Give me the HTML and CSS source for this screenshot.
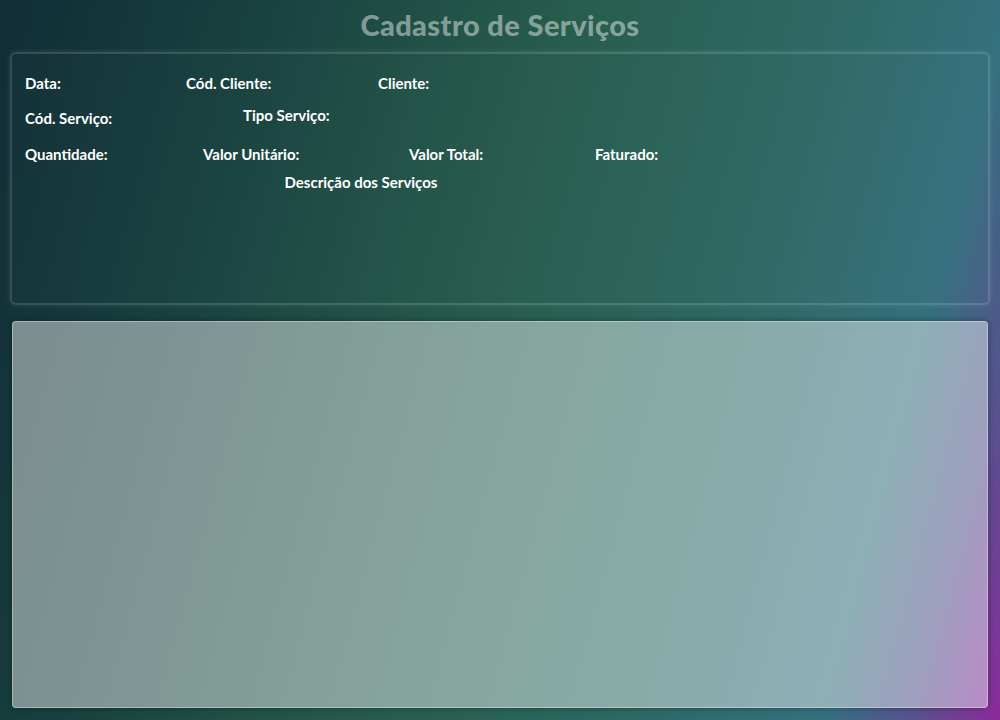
FILE: index.html
```html
<!DOCTYPE html>
<html lang="pt-BR">
<head>
<meta charset="utf-8">
<title>Cadastro de Serviços</title>
<link rel="stylesheet" href="styles.css">
</head>
<body>
<div class="page">
  <h1 class="title">Cadastro de Serviços</h1>
  <form class="form-panel">
    <div class="row row-1">
      <div class="field w-161"><label>Data:</label></div>
      <div class="field w-192"><label>Cód. Cliente:</label></div>
      <div class="field"><label>Cliente:</label></div>
    </div>
    <div class="row row-2">
      <div class="field w-218 low"><label>Cód. Serviço:</label></div>
      <div class="field"><label>Tipo Serviço:</label></div>
    </div>
    <div class="row row-3">
      <div class="field w-178"><label>Quantidade:</label></div>
      <div class="field w-206"><label>Valor Unitário:</label></div>
      <div class="field w-186"><label>Valor Total:</label></div>
      <div class="field"><label>Faturado:</label></div>
    </div>
    <div class="row row-4">
      <div class="desc"><label>Descrição dos Serviços</label></div>
    </div>
  </form>
  <section class="table-panel"></section>
</div>
</body>
</html>
```
FILE: styles.css
```css
html, body {
  margin: 0;
  padding: 0;
}
body {
  width: 1000px;
  height: 720px;
  overflow: hidden;
  font-family: Lato, "Noto Sans", "Liberation Sans", sans-serif;
  background: linear-gradient(105deg, #112d36 0%, #19413f 22%, #275d4d 48%, #2d6862 68%, #35707e 85%, #52568c 92%, #8c2a9c 100%);
}
.page {
  display: flex;
  flex-direction: column;
  height: 720px;
  padding: 0 10px;
  box-sizing: border-box;
}
.title {
  margin: 0;
  height: 52px;
  line-height: 50px;
  text-align: center;
  font-size: 29px;
  font-weight: 900;
  color: rgba(255, 255, 255, 0.45);
  letter-spacing: 0.4px;
}
.form-panel {
  height: 253px;
  box-sizing: border-box;
  border: 2px solid rgba(255, 255, 255, 0.14);
  border-radius: 6px;
  box-shadow: 0 0 5px rgba(255, 255, 255, 0.12);
  background: rgba(255, 255, 255, 0.01);
  padding: 19px 13px 0;
  display: flex;
  flex-direction: column;
}
.row {
  display: flex;
  align-items: flex-start;
  height: 18px;
}
.row-2 { margin-top: 14px; }
.row-3 { margin-top: 21px; }
.row-4 { margin-top: 10px; }
.field label,
.desc label {
  font-size: 15px;
  line-height: 18px;
  font-weight: 700;
  color: #ffffff;
}
.field.low { padding-top: 3px; }
.w-161 { width: 161px; }
.w-192 { width: 192px; }
.w-218 { width: 218px; }
.w-178 { width: 178px; }
.w-206 { width: 206px; }
.w-186 { width: 186px; }
.desc {
  width: 672px;
  text-align: center;
}
.table-panel {
  margin: 16px 2px 12px;
  flex: 1;
  border: 1px solid rgba(255, 255, 255, 0.35);
  border-radius: 4px;
  background: rgba(255, 255, 255, 0.44);
  box-shadow: 0 0 6px rgba(0, 0, 0, 0.35);
}
```
